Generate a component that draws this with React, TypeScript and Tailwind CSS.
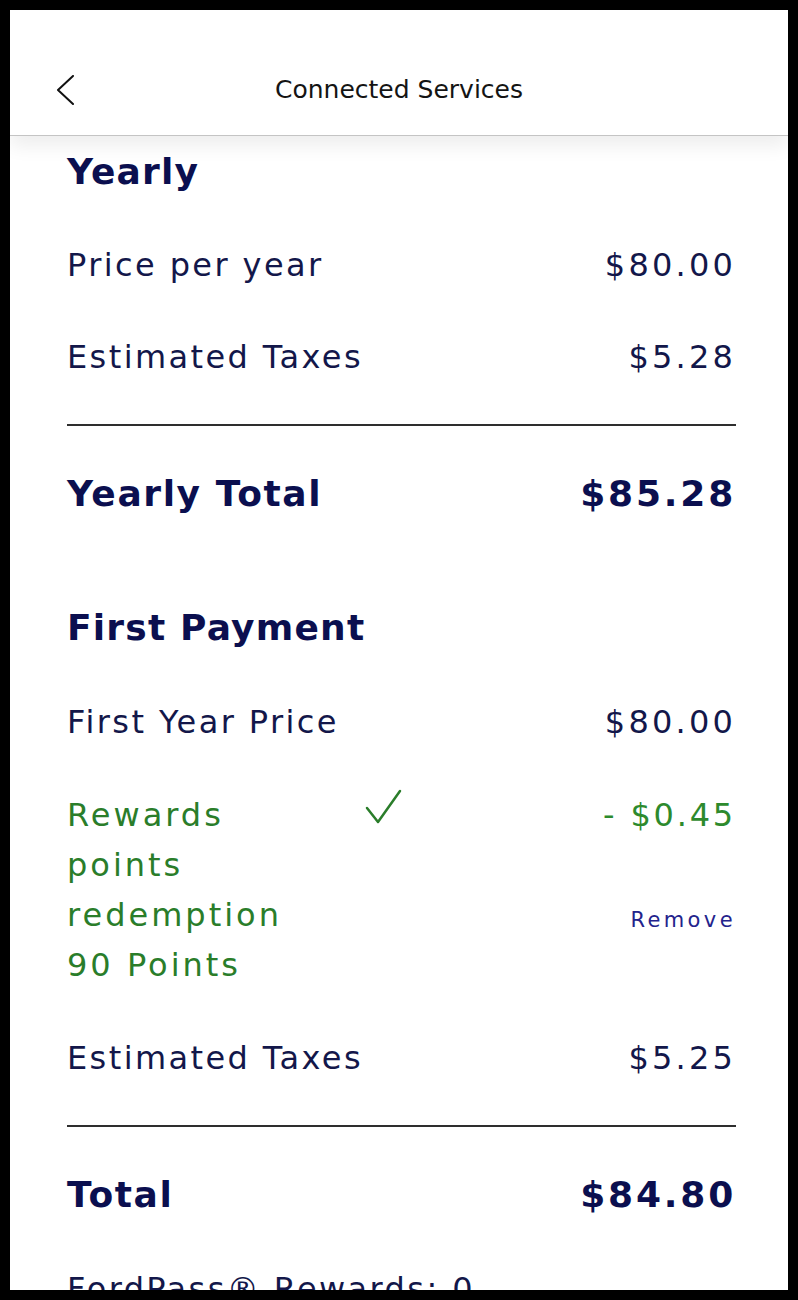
import React from 'react';

const font = { fontFamily: '"DejaVu Sans", "Noto Sans", sans-serif' };

function Row({ label, value, bold = false }: { label: string; value: string; bold?: boolean }) {
  if (bold) {
    return (
      <div className="flex h-[92px] items-center justify-between text-[36px] font-bold text-[#0b0f4f]">
        <span className="tracking-[1.6px]">{label}</span>
        <span className="tracking-[2.8px]">{value}</span>
      </div>
    );
  }
  return (
    <div className="flex h-[92px] items-center justify-between text-[32px] text-[#13174a]">
      <span className="tracking-[2.4px]">{label}</span>
      <span className="tracking-[3.2px]">{value}</span>
    </div>
  );
}

function Divider({ top }: { top: string }) {
  return <div className={`${top} h-[2px] bg-[#2e2e2e]`} />;
}

export default function App() {
  return (
    <div className="h-[1300px] overflow-hidden bg-black p-[10px]" style={font}>
      <div className="h-full overflow-hidden bg-white">
        {/* Header */}
        <header className="relative z-10 h-[126px] border-b border-[#c4c4c4] bg-white pt-[60px] shadow-[0_10px_18px_rgba(0,0,0,0.07)]">
          <div className="grid h-[40px] grid-cols-[1fr_auto_1fr] items-center">
            <div className="pl-[46px]">
              <svg width="20" height="30" viewBox="0 0 20 30" fill="none">
                <polyline points="17,1 2,15 17,29" stroke="#111" strokeWidth="2" strokeLinecap="round" strokeLinejoin="round" />
              </svg>
            </div>
            <h1 className="text-[25px] text-[#141414]">Connected Services</h1>
            <div />
          </div>
        </header>

        <main className="pl-[57px] pr-[52px]">
          {/* Yearly */}
          <div className="flex h-[72px] items-center text-[36px] font-bold tracking-[1.2px] text-[#0b0f4f]">Yearly</div>
          <div className="mt-[11px]">
            <Row label="Price per year" value="$80.00" />
            <Row label="Estimated Taxes" value="$5.28" />
          </div>
          <Divider top="mt-[21px]" />
          <div className="mt-[22px]">
            <Row label="Yearly Total" value="$85.28" bold />
          </div>

          {/* First Payment */}
          <div className="mt-[52px] flex h-[72px] items-center text-[36px] font-bold tracking-[1.2px] text-[#0b0f4f]">
            First Payment
          </div>
          <div className="mt-[12px]">
            <Row label="First Year Price" value="$80.00" />
          </div>

          <div className="mt-[22px] flex text-[32px] leading-[50px]">
            <div className="w-[298px] tracking-[3px] text-[#2a7d2a]">
              <div>Rewards</div>
              <div>points</div>
              <div>redemption</div>
              <div>90 Points</div>
            </div>
            <svg width="38" height="38" viewBox="0 0 38 38" fill="none" className="mt-[-1px]">
              <polyline points="2,19 13,33 35,2" stroke="#2a7d2a" strokeWidth="2.5" strokeLinecap="round" strokeLinejoin="round" />
            </svg>
            <div className="flex flex-1 flex-col items-end">
              <div className="tracking-[2.8px] text-[#2d8a2d]">- $0.45</div>
              <div className="mt-[66px] text-[21px] leading-[28px] tracking-[3.4px] text-[#23238c]">Remove</div>
            </div>
          </div>

          <div className="mt-[22px]">
            <Row label="Estimated Taxes" value="$5.25" />
          </div>
          <Divider top="mt-[21px]" />
          <div className="mt-[22px]">
            <Row label="Total" value="$84.80" bold />
          </div>

          <div className="mt-[28px] text-[32px] leading-[40px] tracking-[2.4px] text-[#13174a]">FordPass® Rewards: 0</div>
        </main>
      </div>
    </div>
  );
}
